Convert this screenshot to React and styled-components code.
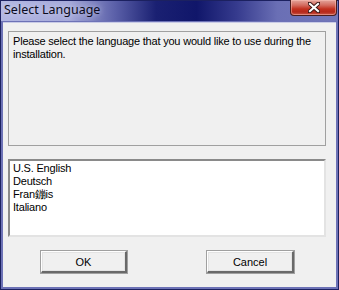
import React from "react";
import styled, { createGlobalStyle } from "styled-components";

const GlobalStyle = createGlobalStyle`
  html, body {
    margin: 0;
    padding: 0;
    background: #6b70b4;
  }
`;

const Window = styled.div`
  width: 339px;
  height: 290px;
  box-sizing: border-box;
  border: 1px solid #1c2160;
  background: #6d72b6;
  display: flex;
  flex-direction: column;
  font-family: "Liberation Sans", Arial, sans-serif;
`;

const TitleBar = styled.div`
  height: 20px;
  display: flex;
  align-items: flex-start;
  justify-content: space-between;
  background: linear-gradient(
    90deg,
    #b3b7e2 0%,
    #a5a9da 20%,
    #5a5fa8 34%,
    #1a2072 46%,
    #10166a 58%,
    #363b8e 70%,
    #6a6fb5 82%,
    #7277ba 100%
  );
`;

const Title = styled.span`
  font-family: "Noto Sans", "Open Sans", sans-serif;
  font-size: 12.5px;
  line-height: 18px;
  color: #0b0b20;
  padding-left: 3px;
  text-shadow: 0 0 6px rgba(230, 232, 250, 0.9);
`;

const CloseButton = styled.div`
  width: 47px;
  height: 16px;
  margin-top: -1px;
  margin-right: 1px;
  box-sizing: border-box;
  border: 1px solid #4a1d1d;
  border-top: none;
  border-radius: 0 0 4px 4px;
  background: linear-gradient(
    180deg,
    #e4a59c 0%,
    #d36b5f 35%,
    #c2301f 60%,
    #b5281a 80%,
    #c9584a 100%
  );
  box-shadow: inset 0 0 0 1px rgba(255, 200, 190, 0.45);
  display: flex;
  align-items: center;
  justify-content: center;
`;

const Client = styled.div`
  flex: 1;
  margin: 1px 2px 2px 2px;
  box-sizing: border-box;
  background: #f0f0f0;
  border-top: 1px solid #c9cbe6;
  padding: 8px 0 0 5px;
  display: flex;
  flex-direction: column;
`;

const MessageBox = styled.div`
  width: 318px;
  height: 115px;
  box-sizing: border-box;
  border: 1px solid #a0a0a0;
  padding: 3px 4px;
  font-size: 11px;
  letter-spacing: -0.2px;
  line-height: 13px;
  color: #000;
`;

const ListBox = styled.div`
  width: 318px;
  height: 78px;
  margin-top: 13px;
  box-sizing: border-box;
  background: #fff;
  border-top: 2px solid #8a8a8a;
  border-left: 2px solid #8a8a8a;
  border-right: 2px solid #e3e3e3;
  border-bottom: 2px solid #e3e3e3;
  padding-top: 1px;
`;

const ListItem = styled.div`
  font-size: 11px;
  letter-spacing: -0.2px;
  line-height: 13px;
  padding-left: 3px;
  color: #000;
  white-space: nowrap;
`;

const ButtonRow = styled.div`
  display: flex;
  gap: ${(p) => p.gap}px;
  margin-top: 14px;
  padding-left: 33px;
`;

const Button = styled.div`
  width: ${(p) => p.width}px;
  height: 22px;
  box-sizing: border-box;
  background: #f0f0f0;
  border-top: 1px solid #ffffff;
  border-left: 1px solid #ffffff;
  border-right: 2px solid #696969;
  border-bottom: 2px solid #696969;
  box-shadow: inset 0 0 0 1px #e3e3e3;
  outline: 1px solid #a0a0a0;
  display: flex;
  align-items: center;
  justify-content: center;
  font-size: 11px;
  color: #000;
`;

const CloseIcon = () => (
  <svg width="12" height="11" viewBox="0 0 12 11">
    <path
      d="M1.5 1.5 L10.5 9.5 M10.5 1.5 L1.5 9.5"
      stroke="#3a1414"
      strokeWidth="4"
      strokeLinecap="square"
    />
    <path
      d="M2 2 L10 9 M10 2 L2 9"
      stroke="#ffffff"
      strokeWidth="2.2"
      strokeLinecap="square"
    />
  </svg>
);

const languages = ["U.S. English", "Deutsch", "Fran鏰is", "Italiano"];

export default function App() {
  return (
    <>
      <GlobalStyle />
      <Window>
        <TitleBar>
          <Title>Select Language</Title>
          <CloseButton>
            <CloseIcon />
          </CloseButton>
        </TitleBar>
        <Client>
          <MessageBox>
            Please select the language that you would like to use during the
            installation.
          </MessageBox>
          <ListBox>
            {languages.map((lang) => (
              <ListItem key={lang}>{lang}</ListItem>
            ))}
          </ListBox>
          <ButtonRow gap={80}>
            <Button width={86}>OK</Button>
            <Button width={87}>Cancel</Button>
          </ButtonRow>
        </Client>
      </Window>
    </>
  );
}
